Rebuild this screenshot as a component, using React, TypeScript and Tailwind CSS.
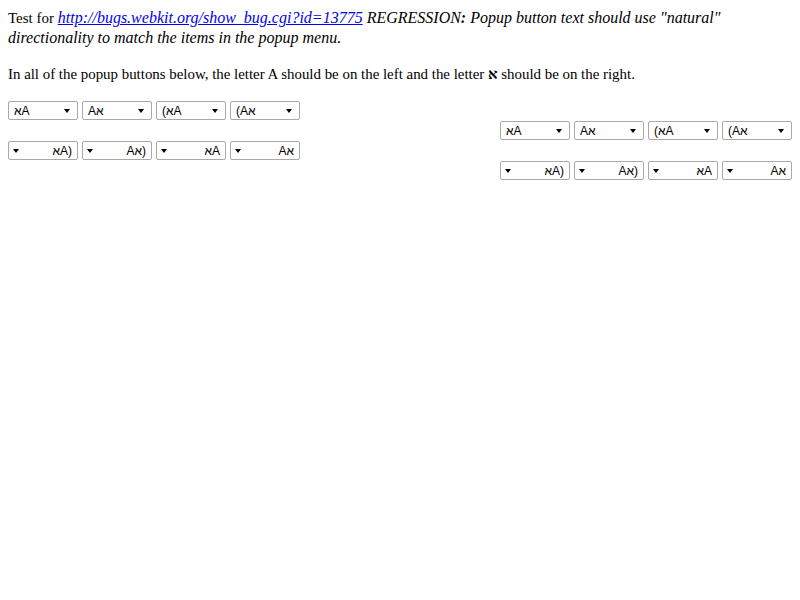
import React from "react";

function Arrow() {
  return (
    <svg width="6" height="4" viewBox="0 0 6 4" className="shrink-0 block">
      <polygon points="0,0 6,0 3,4" fill="#000" />
    </svg>
  );
}

function Popup({ text, rtl }: { text: string; rtl?: boolean }) {
  return (
    <div
      className="w-[70px] h-[19px] mt-[1px] border border-[#a9a9a9] rounded-[2px] bg-white flex items-center text-[12px] leading-none text-black"
      style={{ fontFamily: '"Liberation Sans", "DejaVu Sans", Arial, sans-serif' }}
    >
      {rtl ? (
        <>
          <span className="ml-[4px]"><Arrow /></span>
          <span className="flex-1 text-right pr-[5px] whitespace-pre">
            <bdo dir="ltr">{text}</bdo>
          </span>
        </>
      ) : (
        <>
          <span className="flex-1 pl-[5px] whitespace-pre">
            <bdo dir="ltr">{text}</bdo>
          </span>
          <span className="mr-[7px]"><Arrow /></span>
        </>
      )}
    </div>
  );
}

const row1 = ["\u05D0A", "A\u05D0", "(\u05D0A", "(A\u05D0"];
const row2 = ["\u05D0A)", "A\u05D0)", "\u05D0A", "A\u05D0"];

function Row({ items, rtl, right }: { items: string[]; rtl?: boolean; right?: boolean }) {
  return (
    <div className={`h-[20px] flex gap-1 ${right ? "justify-end" : "justify-start"}`}>
      {items.map((t, i) => (
        <Popup key={i} text={t} rtl={rtl} />
      ))}
    </div>
  );
}

export default function App() {
  return (
    <div
      className="p-2 text-[16px] leading-[20px] text-black bg-white min-h-[600px]"
      style={{ fontFamily: '"Liberation Serif", "Times New Roman", serif' }}
    >
      <p>
        <span className="text-[15px]">Test for </span>
        <a href="#" className="italic text-[#0000ee] underline">
          http://bugs.webkit.org/show_bug.cgi?id=13775
        </a>{" "}
        <i>
          REGRESSION<b>:</b> Popup button text should use "natural" directionality to match the items in the popup menu.
        </i>
      </p>
      <p className="mt-4 text-[14.9px]">
        In all of the popup buttons below, the letter A should be on the left and the letter <b>{"\u05D0"}</b> should be on the right.
      </p>
      <div className="mt-4">
        <Row items={row1} />
        <Row items={row1} right />
        <Row items={row2} rtl />
        <Row items={row2} rtl right />
      </div>
    </div>
  );
}
